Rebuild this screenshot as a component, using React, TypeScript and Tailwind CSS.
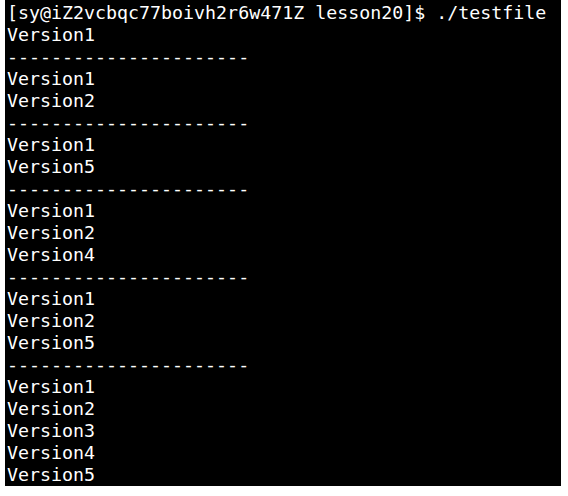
const lines = [
  '[sy@iZ2vcbqc77boivh2r6w471Z lesson20]$ ./testfile',
  'Version1',
  '----------------------',
  'Version1',
  'Version2',
  '----------------------',
  'Version1',
  'Version5',
  '----------------------',
  'Version1',
  'Version2',
  'Version4',
  '----------------------',
  'Version1',
  'Version2',
  'Version5',
  '----------------------',
  'Version1',
  'Version2',
  'Version3',
  'Version4',
  'Version5',
];

export default function App() {
  return (
    <div className="w-[568px] h-[496px] bg-white pl-[5px] pr-[7px] pb-[10px]">
      <div className="h-[486px] bg-black pl-[2px] pt-[2px] text-white font-['DejaVu_Sans_Mono',monospace] text-[18.3px] leading-[22px] whitespace-pre">
        {lines.map((l, i) => (
          <div key={i}>{l}</div>
        ))}
      </div>
    </div>
  );
}
